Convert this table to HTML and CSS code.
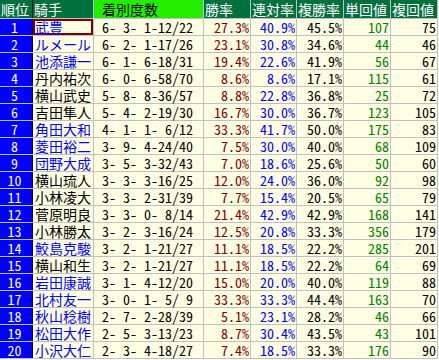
FILE: index.html
```html
<!DOCTYPE html>
<html lang="ja">
<head>
<meta charset="utf-8">
<title>騎手成績</title>
<link rel="stylesheet" href="styles.css">
</head>
<body>
<div class="grid">
  <div class="row">
    <div class="h rank-h">順位</div><div class="h">騎手</div><div class="h rec-h">着別度数</div><div class="h">勝率</div><div class="h">連対率</div><div class="h">複勝率</div><div class="h">単回値</div><div class="h">複回値</div>
  </div>
  <div class="row"><div class="rank">1</div><div class="name blue sel">武豊</div><div class="rec">6- 3- 1-12/22</div><div class="num win">27.3%</div><div class="num ren">40.9%</div><div class="num">45.5%</div><div class="num tan">107</div><div class="num">75</div></div>
  <div class="row"><div class="rank">2</div><div class="name blue">ルメール</div><div class="rec">6- 2- 1-17/26</div><div class="num win">23.1%</div><div class="num ren">30.8%</div><div class="num">34.6%</div><div class="num tan">44</div><div class="num">46</div></div>
  <div class="row"><div class="rank">3</div><div class="name blue">池添謙一</div><div class="rec">6- 1- 6-18/31</div><div class="num win">19.4%</div><div class="num ren">22.6%</div><div class="num">41.9%</div><div class="num tan">56</div><div class="num">67</div></div>
  <div class="row"><div class="rank">4</div><div class="name">丹内祐次</div><div class="rec">6- 0- 6-58/70</div><div class="num win">8.6%</div><div class="num ren">8.6%</div><div class="num">17.1%</div><div class="num tan">115</div><div class="num">61</div></div>
  <div class="row"><div class="rank">5</div><div class="name">横山武史</div><div class="rec">5- 8- 8-36/57</div><div class="num win">8.8%</div><div class="num ren">22.8%</div><div class="num">36.8%</div><div class="num tan">25</div><div class="num">72</div></div>
  <div class="row"><div class="rank">6</div><div class="name">吉田隼人</div><div class="rec">5- 4- 2-19/30</div><div class="num win">16.7%</div><div class="num ren">30.0%</div><div class="num">36.7%</div><div class="num tan">123</div><div class="num">105</div></div>
  <div class="row"><div class="rank">7</div><div class="name blue">角田大和</div><div class="rec">4- 1- 1- 6/12</div><div class="num win">33.3%</div><div class="num ren">41.7%</div><div class="num">50.0%</div><div class="num tan">175</div><div class="num">83</div></div>
  <div class="row"><div class="rank">8</div><div class="name blue">菱田裕二</div><div class="rec">3- 9- 4-24/40</div><div class="num win">7.5%</div><div class="num ren">30.0%</div><div class="num">40.0%</div><div class="num tan">68</div><div class="num">109</div></div>
  <div class="row"><div class="rank">9</div><div class="name blue">団野大成</div><div class="rec">3- 5- 3-32/43</div><div class="num win">7.0%</div><div class="num ren">18.6%</div><div class="num">25.6%</div><div class="num tan">50</div><div class="num">60</div></div>
  <div class="row"><div class="rank">10</div><div class="name">横山琉人</div><div class="rec">3- 3- 3-16/25</div><div class="num win">12.0%</div><div class="num ren">24.0%</div><div class="num">36.0%</div><div class="num tan">92</div><div class="num">98</div></div>
  <div class="row"><div class="rank">11</div><div class="name">小林凌大</div><div class="rec">3- 3- 2-31/39</div><div class="num win">7.7%</div><div class="num ren">15.4%</div><div class="num">20.5%</div><div class="num tan">65</div><div class="num">79</div></div>
  <div class="row"><div class="rank">12</div><div class="name">菅原明良</div><div class="rec">3- 3- 0- 8/14</div><div class="num win">21.4%</div><div class="num ren">42.9%</div><div class="num">42.9%</div><div class="num tan">168</div><div class="num">141</div></div>
  <div class="row"><div class="rank">13</div><div class="name">小林勝太</div><div class="rec">3- 2- 3-16/24</div><div class="num win">12.5%</div><div class="num ren">20.8%</div><div class="num">33.3%</div><div class="num tan">356</div><div class="num">179</div></div>
  <div class="row"><div class="rank">14</div><div class="name blue">鮫島克駿</div><div class="rec">3- 2- 1-21/27</div><div class="num win">11.1%</div><div class="num ren">18.5%</div><div class="num">22.2%</div><div class="num tan">285</div><div class="num">201</div></div>
  <div class="row"><div class="rank">15</div><div class="name">横山和生</div><div class="rec">3- 2- 1-21/27</div><div class="num win">11.1%</div><div class="num ren">18.5%</div><div class="num">22.2%</div><div class="num tan">64</div><div class="num">69</div></div>
  <div class="row"><div class="rank">16</div><div class="name blue">岩田康誠</div><div class="rec">3- 1- 4-12/20</div><div class="num win">15.0%</div><div class="num ren">20.0%</div><div class="num">40.0%</div><div class="num tan">119</div><div class="num">88</div></div>
  <div class="row"><div class="rank">17</div><div class="name blue">北村友一</div><div class="rec">3- 0- 1- 5/ 9</div><div class="num win">33.3%</div><div class="num ren">33.3%</div><div class="num">44.4%</div><div class="num tan">163</div><div class="num">70</div></div>
  <div class="row"><div class="rank">18</div><div class="name blue">秋山稔樹</div><div class="rec">2- 7- 2-28/39</div><div class="num win">5.1%</div><div class="num ren">23.1%</div><div class="num">28.2%</div><div class="num tan">46</div><div class="num">66</div></div>
  <div class="row"><div class="rank">19</div><div class="name blue">松田大作</div><div class="rec">2- 5- 3-13/23</div><div class="num win">8.7%</div><div class="num ren">30.4%</div><div class="num">43.5%</div><div class="num tan">43</div><div class="num">101</div></div>
  <div class="row"><div class="rank">20</div><div class="name blue">小沢大仁</div><div class="rec">2- 3- 4-18/27</div><div class="num win">7.4%</div><div class="num ren">18.5%</div><div class="num">33.3%</div><div class="num tan">176</div><div class="num">90</div></div>
</div>
</body>
</html>
```

FILE: styles.css
```css
html, body {
  margin: 0;
  padding: 0;
  background: #ffffff;
}

.grid {
  display: inline-grid;
  grid-template-columns: 32px 60px 109px 46px 45px 46px 46px 46px;
  grid-template-rows: 18px repeat(20, 16px);
  gap: 1px;
  padding: 0 1px 1px 0;
  background: #c0c0c0;
  font-family: "Noto Sans CJK JP", sans-serif;
  font-size: 14px;
  font-feature-settings: "hwid" 1;
  color: #000000;
}

.row {
  display: contents;
}

.row > div {
  line-height: 16px;
  white-space: pre;
  background: #ffffe4;
}

.row > .h {
  background: #00703c;
  color: #ffffff;
  line-height: 18px;
  padding-left: 1px;
}

.row > .rec-h {
  background: #22ee00;
  color: #000000;
  padding-left: 8px;
}

.row > .rank-h,
.row > .rank {
  box-shadow: 1px 0 0 #000000;
}

.row > .rank {
  background: #0000ff;
  color: #ffffff;
  text-align: center;
  padding-right: 3px;
}

.row > .name {
  padding-left: 2px;
}

.blue {
  color: #0000ff;
}

.row > .sel {
  box-shadow: inset 0 0 0 2px #800000;
}

.row > .rec {
  padding-left: 8px;
}

.row > .num {
  text-align: right;
  padding-right: 1px;
}

.win {
  color: #800000;
}

.ren {
  color: #0000ff;
}

.tan {
  color: #008000;
}
```
